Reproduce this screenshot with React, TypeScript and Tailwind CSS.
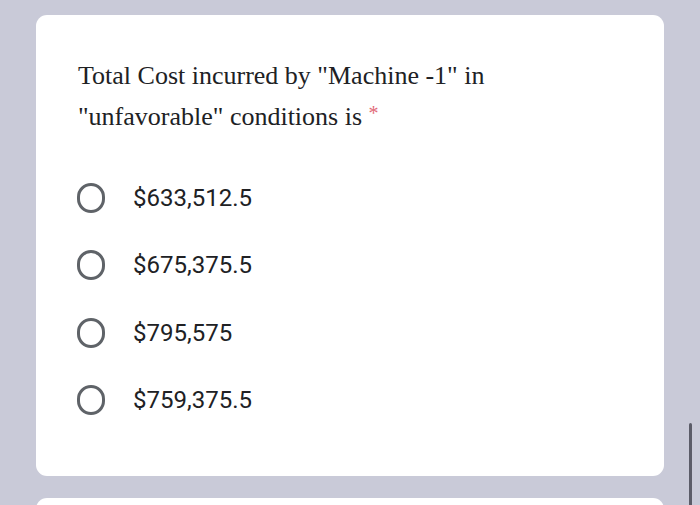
import React from 'react';

const options = ['$633,512.5', '$675,375.5', '$795,575', '$759,375.5'];

export default function App() {
  return (
    <div className="relative w-[700px] h-[505px] overflow-hidden bg-[#c9cad8]">
      <div className="pt-[15px] pl-[36px] flex flex-col gap-[22px]">
        {/* Question card */}
        <div className="w-[628px] h-[461px] bg-white rounded-[11px] pl-[42px] pt-[40px]">
          <div
            className="w-[460px] text-[26px] leading-[41px] text-[#202124]"
            style={{ fontFamily: '"Liberation Serif", "Times New Roman", serif' }}
          >
            Total Cost incurred by "Machine -1" in "unfavorable" conditions is{' '}
            <span className="text-[20px] leading-none text-[#e26a78] align-[5px]">*</span>
          </div>

          <div className="mt-[42px] flex flex-col gap-[30.5px]">
            {options.map((o) => (
              <label key={o} className="flex items-center h-[37px] -ml-[1px]">
                <span className="w-[28px] h-[30px] rounded-full border-[3px] border-[#5f6368] shrink-0" />
                <span
                  className="ml-[28px] text-[24px] text-[#202124]"
                  style={{ fontFamily: 'Roboto, "Liberation Sans", sans-serif' }}
                >
                  {o}
                </span>
              </label>
            ))}
          </div>
        </div>

        {/* Next card, partly visible */}
        <div className="w-[628px] h-[60px] bg-white rounded-[11px]" />
      </div>

      {/* Scrollbar */}
      <div className="absolute left-[689px] top-[423px] w-[3px] h-[90px] rounded-full bg-[#5b5c68]" />
    </div>
  );
}
